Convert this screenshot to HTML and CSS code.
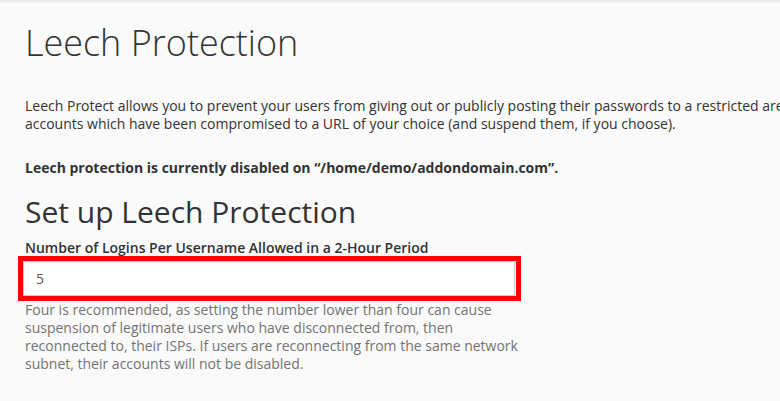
FILE: index.html
```
<!DOCTYPE html>
<html lang="en">
<head>
  <meta charset="UTF-8" />
  <meta name="viewport" content="width=device-width, initial-scale=1.0"/>
  <title>Leech Protection</title>
  <link rel="stylesheet" href="styles.css">
</head>
<body>
  <div class="top-shadow"></div>

  <div class="page">
    <h1>Leech Protection</h1>

    <p class="intro">
      Leech Protect allows you to prevent your users from giving out or publicly posting their passwords to a restricted area of your site. This feature redirects
      accounts which have been compromised to a URL of your choice (and suspend them, if you choose).
    </p>

    <p class="status">Leech protection is currently disabled on “/home/demo/addondomain.com”.</p>

    <h2>Set up Leech Protection</h2>

    <form class="form-group">
      <label for="numLogins">Number of Logins Per Username Allowed in a 2-Hour Period</label>
      <div class="highlight">
        <input type="text" id="numLogins" value="5" />
      </div>
      <p class="help">
        Four is recommended, as setting the number lower than four can cause suspension of legitimate users who have disconnected from, then reconnected to, their ISPs. If users are reconnecting from the same network subnet, their accounts will not be disabled.
      </p>
    </form>
  </div>
</body>
</html>
```

FILE: styles.css
```
* {
  box-sizing: border-box;
}

html, body {
  overflow: hidden;
}

body {
  font-family: "Open Sans", Arial, sans-serif;
  margin: 0;
  background-color: #fafafa;
  color: #333;
  font-size: 14px;
}

.top-shadow {
  height: 4px;
  background: linear-gradient(to bottom, rgba(0,0,0,0.08), rgba(0,0,0,0));
}

.page {
  width: 1100px;
  padding: 0 25px;
}

h1 {
  font-size: 36px;
  font-weight: 300;
  line-height: 40px;
  margin: 19px 0 0;
}

.intro {
  line-height: 18px;
  margin: 34px 0 0;
  width: 1040px;
}

.status {
  font-weight: bold;
  margin: 26px 0 0;
  line-height: 18px;
}

h2 {
  font-size: 30px;
  font-weight: 400;
  line-height: 34px;
  margin: 18px 0 0;
}

.form-group {
  width: 500px;
}

.form-group label {
  display: block;
  font-weight: 600;
  line-height: 18px;
  margin-top: 10px;
}

.highlight {
  margin: -1px 0 0 -7px;
  width: 503px;
  border: 5px solid #ff0000;
  padding: 0 1px 0 0;
}

.highlight input {
  display: block;
  width: 100%;
  height: 35px;
  border: 1px solid #ccc;
  background: #fff;
  font-family: inherit;
  font-size: 14px;
  color: #555;
  padding: 0 12px;
  outline: none;
}

.help {
  color: #737373;
  line-height: 18px;
  margin: 0;
}
```
